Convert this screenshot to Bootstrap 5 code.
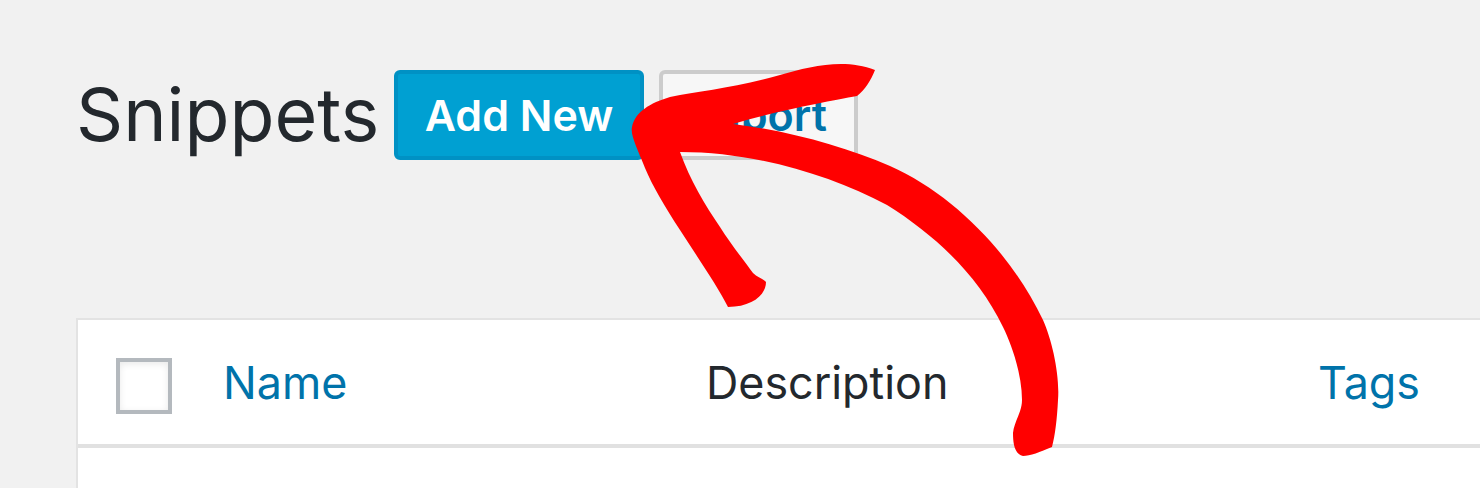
<!DOCTYPE html>
<html lang="en">
<head>
    <meta charset="UTF-8">
    <meta name="viewport" content="width=device-width, initial-scale=1.0">
    <title>Snippets</title>
    <link href="https://cdn.jsdelivr.net/npm/bootstrap@5.3.0/dist/css/bootstrap.min.css" rel="stylesheet">
    <style>
        html, body {
            height: 488px;
            overflow: hidden;
        }

        body {
            background: #f1f1f1;
            font-family: Inter, Roboto, "Liberation Sans", sans-serif;
            color: #23282d;
        }

        .page-wrap {
            position: relative;
            width: 1480px;
            height: 488px;
            overflow: hidden;
            padding: 70px 0 0 76px;
        }

        .page-head {
            height: 90px;
            margin-bottom: 158px;
        }

        .page-title {
            font-family: Inter, Roboto, "Liberation Sans", sans-serif;
            font-size: 73.5px;
            font-weight: 400;
            line-height: 90px;
            width: 318px;
            margin: 0;
            color: #23282d;
        }

        .wp-btn {
            height: 90px;
            border-width: 4px;
            border-style: solid;
            border-radius: 6px;
            font-size: 43px;
            font-weight: 600;
            line-height: 1;
            padding: 0;
        }

        .wp-btn-add {
            width: 250px;
            background: #00a0d2;
            border-color: #0091c4;
            color: #fff;
        }

        .wp-btn-import {
            width: 199px;
            margin-left: 15px;
            background: #f7f7f7;
            border-color: #ccc;
            color: #0073aa;
        }

        .snip-table {
            table-layout: fixed;
            width: 1500px;
            margin: 0;
            background: #fff;
            border-top: 2px solid #e3e3e3;
            border-left: 2px solid #e3e3e3;
            border-collapse: separate;
            border-spacing: 0;
        }

        .snip-table th {
            height: 128px;
            padding: 4px 0 0;
            background: #fff;
            border-bottom: 4px solid #e1e1e1;
            font-size: 44.8px;
            font-weight: 400;
            vertical-align: middle;
            color: #23282d;
        }

        .snip-table td {
            height: 60px;
            padding: 0;
            background: #fff;
            border: 0;
        }

        .snip-table th a {
            color: #0073aa;
            text-decoration: none;
        }

        .col-check { width: 145px; }
        .col-name { width: 483px; }
        .col-desc { width: 612px; }

        .check-box {
            display: block;
            width: 56px;
            height: 56px;
            margin: 4px 0 0 38px;
            background: #fff;
            border: 4px solid #b4b9be;
            border-radius: 0;
            box-shadow: inset 0 2px 7px rgba(0, 0, 0, 0.09);
            appearance: none;
        }

        .red-arrow {
            position: absolute;
            left: 0;
            top: 0;
            width: 1480px;
            height: 488px;
            pointer-events: none;
        }
    </style>
</head>
<body>
    <div class="page-wrap">
        <div class="page-head d-flex align-items-center">
            <h1 class="page-title">Snippets</h1>
            <a href="#" class="btn wp-btn wp-btn-add d-flex align-items-center justify-content-center">Add New</a>
            <a href="#" class="btn wp-btn wp-btn-import d-flex align-items-center justify-content-center">Import</a>
        </div>

        <table class="table snip-table">
            <thead>
                <tr>
                    <th class="col-check"><input type="checkbox" class="check-box"></th>
                    <th class="col-name"><a href="#">Name</a></th>
                    <th class="col-desc">Description</th>
                    <th><a href="#">Tags</a></th>
                </tr>
            </thead>
            <tbody>
                <tr><td colspan="4"></td></tr>
            </tbody>
        </table>

        <!-- hand drawn arrow on top of the page -->
        <svg class="red-arrow" viewBox="0 0 1480 488" xmlns="http://www.w3.org/2000/svg">
            <path fill="#ff0000" d="M875 70
                C871 80 865 90 857 96
                C830 101 780 110 733 124
                C790 131 845 147 890 166
                C955 195 1012 255 1043 320
                C1052 340 1060 375 1058 400
                C1057 420 1055 435 1052 447
                C1040 452 1030 456 1023 456
                C1015 454 1013 445 1013 433
                C1014 422 1022 412 1022 400
                C1022 375 1012 345 1003 327
                C978 275 935 235 887 205
                C830 175 755 152 680 152
                C690 180 705 205 720 227
                C730 243 745 262 753 273
                C758 278 764 279 766 282
                C766 295 752 307 728 307
                C718 287 698 258 680 230
                C665 207 652 185 645 168
                C638 150 630 135 632 127
                C635 112 650 103 670 97
                C700 91 735 88 780 75
                C810 66 845 58 875 70 Z"/>
        </svg>
    </div>

    <script src="https://cdn.jsdelivr.net/npm/bootstrap@5.3.0/dist/js/bootstrap.bundle.min.js"></script>
</body>
</html>
